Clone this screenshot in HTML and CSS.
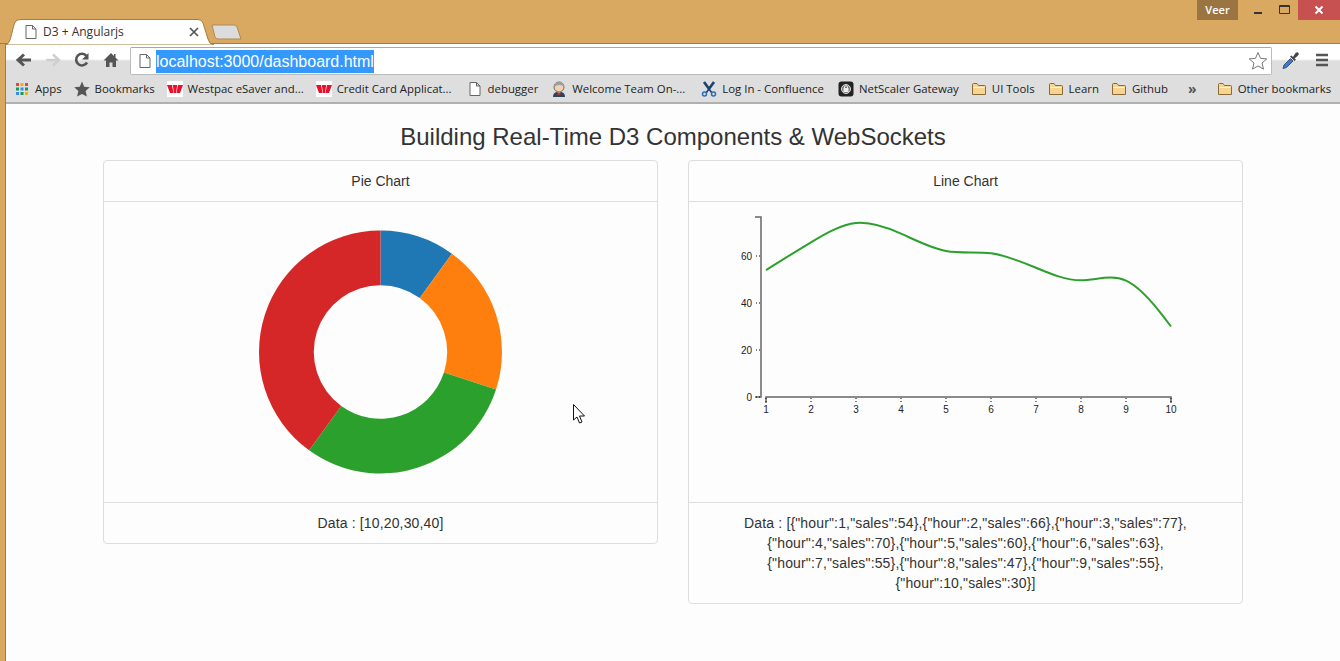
FILE: index.html
```html
<!DOCTYPE html>
<html lang="en">
<head>
    <meta charset="UTF-8">
    <title>D3 + Angularjs</title>
    <link rel="stylesheet" href="styles.css">
</head>
<body>

    <svg class="defs">
        <symbol id="doc" viewBox="0 0 16 16">
            <path d="M3 1.500h6.500l3.500 3.500v9.500H3z M9.500 1.500V5H13" fill="#fff" stroke="#666" stroke-width="1"/>
        </symbol>
        <symbol id="folder" viewBox="0 0 16 16">
            <path d="M1.500 13.500V3.500q0-1 1-1h3.500l1.500 2h6q1 0 1 1v8z" fill="#f6d493" stroke="#8a6a35"/>
            <path d="M2.500 6.500h11" stroke="#fff3d6"/>
        </symbol>
        <symbol id="westpac" viewBox="0 0 16 16">
            <rect width="16" height="16" fill="#fff"/>
            <path d="M0 4h5l1.500 8H3z M5.800 4h4.400L9 12H7z M11 4h5l-3 8H9.500z" fill="#e8102a"/>
        </symbol>
    </svg>

    <header class="titlebar">
        <div class="tab">
            <svg class="tab-shape" width="216" height="26" viewBox="0 0 216 26"><path d="M6 26C12 24 12 6 16 2Q18 .5 21 .5H198Q202 .5 203 4L208 20Q209 25 214 26z" fill="#fff" stroke="#a37c3f"/></svg>
            <svg class="tab-icon" width="16" height="16"><use href="#doc"/></svg>
            <span class="tab-title">D3 + Angularjs</span>
            <svg class="tab-close" width="10" height="10" viewBox="0 0 10 10"><path d="M1 1l8 8M9 1l-8 8" stroke="#555" stroke-width="1.700"/></svg>
        </div>
        <svg class="new-tab" width="32" height="16" viewBox="0 0 32 16"><path d="M1 1H23Q25 1 26 3L30 15H7Q5 15 4 13z" fill="#dcdcdc" stroke="#b08b50"/></svg>
        <div class="user-badge">Veer</div>
        <div class="win-controls">
            <div class="win-btn"><svg width="10" height="10" viewBox="0 0 10 10"><path d="M1 8h8" stroke="#333" stroke-width="2"/></svg></div>
            <div class="win-btn"><svg width="11" height="10" viewBox="0 0 11 10"><path d="M.5 .5h10v8H.5z M.5 1.500h10" fill="none" stroke="#333"/></svg></div>
            <div class="win-btn win-close"><svg width="10" height="10" viewBox="0 0 10 10"><path d="M1.500 1.500l7 7M8.500 1.500l-7 7" stroke="#fff" stroke-width="2"/></svg></div>
        </div>
    </header>

    <div class="window">
        <div class="toolbar">
            <svg class="nav-icon" width="20" height="20" viewBox="0 0 20 20"><path d="M17 10H5M10 4.500L4 10l6 5.500" fill="none" stroke="#555" stroke-width="3"/></svg>
            <svg class="nav-icon" width="20" height="20" viewBox="0 0 20 20"><path d="M3 10h12M10 4.500L16 10l-6 5.500" fill="none" stroke="#cfcfcf" stroke-width="2.400"/></svg>
            <svg class="nav-icon" width="20" height="20" viewBox="0 0 20 20"><path d="M15 12.500A5.800 5.800 0 1 1 14.500 6" fill="none" stroke="#555" stroke-width="2.600"/><path d="M16.500 3v6.500H10z" fill="#555"/></svg>
            <svg class="nav-icon" width="20" height="20" viewBox="0 0 20 20"><path d="M10 3L2.500 10.500H5V17h3.500v-4.500h3V17H15v-6.500h2.500L14.500 7.500V4H13v2z" fill="#555"/></svg>
            <div class="omnibox">
                <svg width="16" height="16"><use href="#doc"/></svg>
                <span class="url">localhost:3000/dashboard.html</span>
                <svg class="star" width="20" height="20" viewBox="0 0 20 20"><path d="M10 1.500l2.500 5.800 6.300.6-4.800 4.100 1.500 6.100L10 14.900l-5.500 3.200L6 12 1.200 7.900l6.300-.6z" fill="#fff" stroke="#777"/></svg>
            </div>
            <svg class="dropper" width="20" height="20" viewBox="0 0 20 20"><path d="M2 18.500L3 15l6.500-6.500 2.500 2.500L5.500 17.500z" fill="#3c78d8" stroke="#456"/><path d="M10.500 5.500l1.500 1.500 2.500-4q2-1.500 3 0t-1 3l-3 2.500L15 9.500 13.500 11 9 6.500z" fill="#444"/></svg>
            <svg class="menu" width="14" height="14" viewBox="0 0 14 14"><path d="M1 2h12M1 7h12M1 12h12" stroke="#555" stroke-width="2.400"/></svg>
        </div>

        <nav class="bookmarks">
            <a class="bm">
                <svg width="16" height="16" viewBox="0 0 16 16">
                    <path d="M2 2h3v3H2z" fill="#e8453c"/><path d="M6.500 2h3v3h-3z" fill="#f4b400"/><path d="M11 2h3v3h-3z" fill="#e8453c"/>
                    <path d="M2 6.500h3v3H2z" fill="#0f9d58"/><path d="M6.500 6.500h3v3h-3z" fill="#4285f4"/><path d="M11 6.500h3v3h-3z" fill="#0f9d58"/>
                    <path d="M2 11h3v3H2z" fill="#4285f4"/><path d="M6.500 11h3v3h-3z" fill="#0f9d58"/><path d="M11 11h3v3h-3z" fill="#f4b400"/>
                </svg>
                Apps
            </a>
            <a class="bm">
                <svg width="16" height="16" viewBox="0 0 16 16"><path d="M8 .5l2.200 5.200 5.600.5-4.200 3.700 1.300 5.500L8 12.900l-4.900 2.500 1.300-5.500L.2 6.200l5.600-.5z" fill="#555"/></svg>
                Bookmarks
            </a>
            <a class="bm"><svg width="16" height="16"><use href="#westpac"/></svg>Westpac eSaver and...</a>
            <a class="bm"><svg width="16" height="16"><use href="#westpac"/></svg>Credit Card Applicat...</a>
            <a class="bm bm-debugger"><svg width="16" height="16"><use href="#doc"/></svg>debugger</a>
            <a class="bm bm-welcome">
                <svg width="16" height="16" viewBox="0 0 16 16">
                    <circle cx="8" cy="6" r="5" fill="#f0d3b0" stroke="#7a6a58"/>
                    <path d="M3 6q0-5 5-5t5 5q-2-2.500-5-2t-5 2z" fill="#9aa0a5"/>
                    <path d="M2 16q0-4.500 4-5l2 1.500 2-1.500q4 .5 4 5z" fill="#33415c"/>
                    <path d="M7 11l1 1.500 1-1.500 .5 3h-3z" fill="#c33"/>
                </svg>
                Welcome Team On-...
            </a>
            <a class="bm bm-confluence">
                <svg width="16" height="16" viewBox="0 0 16 16"><path d="M3 1l5.500 7.500M13 1L7.500 8.500" stroke="#1d3f72" stroke-width="2.600"/><path d="M8 8l-3 4M8 8l3 4" stroke="#1d3f72" stroke-width="1.600"/><circle cx="3.500" cy="13" r="2" fill="none" stroke="#2a6db5" stroke-width="1.500"/><circle cx="12.500" cy="13" r="2" fill="none" stroke="#2a6db5" stroke-width="1.500"/></svg>
                Log In - Confluence
            </a>
            <a class="bm bm-netscaler">
                <svg width="16" height="16" viewBox="0 0 16 16"><rect x=".5" y=".5" width="15" height="15" rx="3" fill="#222"/><circle cx="8" cy="8" r="4.500" fill="#777" stroke="#ddd"/><rect x="5.500" y="7" width="5" height="4" fill="#eee"/><path d="M6.500 7V5.500q1.500-1.500 3 0V7" fill="none" stroke="#eee"/></svg>
                NetScaler Gateway
            </a>
            <a class="bm"><svg width="16" height="16"><use href="#folder"/></svg>UI Tools</a>
            <a class="bm bm-learn"><svg width="16" height="16"><use href="#folder"/></svg>Learn</a>
            <a class="bm"><svg width="16" height="16"><use href="#folder"/></svg>Github</a>
            <span class="bm-more">»</span>
            <a class="bm bm-other"><svg width="16" height="16"><use href="#folder"/></svg>Other bookmarks</a>
        </nav>

        <main class="page">
            <div class="container">
                <h3>Building Real-Time D3 Components &amp; WebSockets</h3>
                <div class="row">
                    <section class="panel">
                        <div class="panel-heading">Pie Chart</div>
                        <div class="panel-body">
                            <svg class="chart" width="553" height="300">
                                <g transform="translate(276.5,150) scale(.996)">
                                    <path d="M0-122A122 122 0 0 1 71.700-98.700L39.400-54.200A67 67 0 0 0 0-67z" fill="#1f77b4"/>
                                    <path d="M71.700-98.700A122 122 0 0 1 116 37.700L63.700 20.700A67 67 0 0 0 39.400-54.200z" fill="#ff7f0e"/>
                                    <path d="M116 37.700A122 122 0 0 1-71.700 98.700L-39.400 54.200A67 67 0 0 0 63.700 20.700z" fill="#2ca02c"/>
                                    <path d="M-71.700 98.700A122 122 0 0 1 0-122V-67A67 67 0 0 0-39.400 54.200z" fill="#d62728"/>
                                </g>
                            </svg>
                        </div>
                        <div class="panel-footer">Data : [10,20,30,40]</div>
                    </section>
                    <section class="panel">
                        <div class="panel-heading">Line Chart</div>
                        <div class="panel-body">
                            <svg class="chart" id="lineChart" width="553" height="300"></svg>
                        </div>
                        <div class="panel-footer">Data : [{"hour":1,"sales":54},{"hour":2,"sales":66},{"hour":3,"sales":77},{"hour":4,"sales":70},{"hour":5,"sales":60},{"hour":6,"sales":63},{"hour":7,"sales":55},{"hour":8,"sales":47},{"hour":9,"sales":55},{"hour":10,"sales":30}]</div>
                    </section>
                </div>
            </div>
        </main>
    </div>

    <svg class="cursor" width="14" height="21" viewBox="0 0 14 21"><path d="M.5 .5V16l3.500-3 2.500 6 2.500-1-2.500-6h5z" fill="#fff" stroke="#111"/></svg>

    <script src="charts.js"></script>
</body>
</html>
```

FILE: styles.css
```css
body {
    font-family: "Liberation Sans", Arial, sans-serif;
    font-size: 14px;
    line-height: 20px;
    color: #333;
    background: #d9a961;
    margin: 0;
    height: 100vh;
    overflow: hidden;
    display: flex;
    flex-direction: column;
}
.defs {
    display: none;
}

/* window frame */
.titlebar {
    height: 44px;
    flex: none;
    display: flex;
    align-items: flex-start;
    border-bottom: 1px solid #a37c3f;
    box-sizing: border-box;
}
.tab {
    position: relative;
    width: 206px;
    height: 25px;
    margin-top: 19px;
    display: flex;
    align-items: center;
    font-family: "Open Sans", sans-serif;
    font-size: 12px;
    color: #333;
}
.tab-shape {
    position: absolute;
    left: 0;
    top: 0;
    overflow: hidden;
}
.tab-icon {
    position: relative;
    margin-left: 23px;
}
.tab-title {
    position: relative;
    margin-left: 4px;
    flex: 1;
}
.tab-close {
    position: relative;
    margin-right: 7px;
}
.new-tab {
    margin-top: 24px;
    margin-left: 5px;
}
.user-badge {
    margin-left: auto;
    width: 41px;
    height: 20px;
    background: #9a7541;
    color: #fff;
    font-family: "Open Sans", sans-serif;
    font-size: 11px;
    font-weight: 600;
    line-height: 20px;
    text-align: center;
}
.win-controls {
    display: flex;
    margin-left: 6px;
}
.win-btn {
    width: 27px;
    height: 20px;
    display: flex;
    align-items: center;
    justify-content: center;
}
.win-close {
    width: 42px;
    background: #c75050;
}
.window {
    flex: 1;
    margin-left: 5px;
    background: #fdfdfd;
    border-left: 1px solid #a37c3f;
    display: flex;
    flex-direction: column;
    min-height: 0;
}

/* toolbar */
.toolbar {
    height: 32px;
    flex: none;
    display: flex;
    align-items: center;
    box-sizing: border-box;
    padding-left: 8px;
    background: linear-gradient(#fff 15px, #dedede 17px);
}
.nav-icon {
    margin-right: 9px;
}
.omnibox {
    width: 1142px;
    height: 28px;
    box-sizing: border-box;
    border: 1px solid #bbb;
    border-top-color: #a8a8a8;
    border-radius: 2px;
    background: #fff;
    display: flex;
    align-items: center;
    padding-left: 6px;
    margin-top: 2px;
}
.url {
    margin-left: 3px;
    background: #3399ff;
    color: #fff;
    font-size: 16px;
    line-height: 23px;
    height: 23px;
}
.star {
    margin-left: auto;
    margin-right: 3px;
}
.dropper {
    margin-left: 9px;
}
.menu {
    margin-left: 14px;
}

/* bookmarks bar */
.bookmarks {
    height: 28px;
    flex: none;
    box-sizing: border-box;
    border-bottom: 2px solid #b0b0b0;
    background: #dedede;
    display: flex;
    align-items: center;
    gap: 12px;
    padding-left: 8px;
    font-family: "Open Sans", sans-serif;
    font-size: 11.4px;
    color: #222;
    white-space: nowrap;
}
.bm {
    display: flex;
    align-items: center;
    gap: 5px;
}
.bm-debugger {
    margin-left: 3px;
}
.bm-welcome {
    margin-left: 1px;
}
.bm-confluence {
    margin-left: 4px;
}
.bm-netscaler {
    margin-left: 2px;
}
.bm-learn {
    margin-left: 1px;
}
.bm-more {
    margin-left: 8px;
    font-weight: 700;
    color: #555;
    font-size: 14px;
}
.bm-other {
    margin-left: 8px;
}

/* page */
.page {
    flex: 1;
    min-height: 0;
}
.container {
    width: 1140px;
    margin: 0 auto;
}
h3 {
    font-size: 24px;
    font-weight: 400;
    line-height: 26px;
    text-align: center;
    margin: 20px 0 10px;
}
.row {
    display: flex;
    align-items: flex-start;
    gap: 30px;
}
.panel {
    width: 555px;
    box-sizing: border-box;
    border: 1px solid #ddd;
    border-radius: 4px;
    text-align: center;
}
.panel-heading {
    padding: 10px 15px;
    border-bottom: 1px solid #ddd;
}
.panel-body {
    height: 300px;
}
.panel-footer {
    padding: 10px 30px;
    border-top: 1px solid #ddd;
    letter-spacing: .15px;
}
.chart {
    display: block;
}
.domain {
    stroke: #666;
    stroke-width: 1.5;
    fill: none;
}
.tick {
    stroke: #000;
    stroke-width: 1;
    stroke-dasharray: 1 2;
}
.tick-label {
    font-size: 10px;
    fill: #222;
}
.sales-line {
    stroke: #2ca02c;
    stroke-width: 2;
    fill: none;
}

/* mouse pointer caught by the recording */
.cursor {
    position: absolute;
    left: 573px;
    top: 404px;
}
```

FILE: charts.js
```js
var sales = [54, 66, 77, 70, 60, 63, 55, 47, 55, 30];
var svg = document.getElementById("lineChart");
var NS = "http://www.w3.org/2000/svg";

function xPos(hour) { return 77 + (hour - 1) * 45; }
function yPos(value) { return 195 - value * 2.35; }

function add(name, attrs, text) {
    var el = document.createElementNS(NS, name);
    for (var k in attrs) el.setAttribute(k, attrs[k]);
    if (text !== undefined) el.textContent = text;
    svg.appendChild(el);
}

// same curve as d3's basis interpolation
function basisPath(p) {
    var d = "M" + p[0].join(",");
    d += "L" + (5 * p[0][0] + p[1][0]) / 6 + "," + (5 * p[0][1] + p[1][1]) / 6;
    var pts = p.concat([p[p.length - 1]]);
    for (var i = 2; i < pts.length; i++) {
        var a = pts[i - 2], b = pts[i - 1], c = pts[i];
        d += "C" + (2 * a[0] + b[0]) / 3 + "," + (2 * a[1] + b[1]) / 3 +
             " " + (a[0] + 2 * b[0]) / 3 + "," + (a[1] + 2 * b[1]) / 3 +
             " " + (a[0] + 4 * b[0] + c[0]) / 6 + "," + (a[1] + 4 * b[1] + c[1]) / 6;
    }
    return d + "L" + p[p.length - 1].join(",");
}

// y axis
add("path", { "class": "domain", d: "M66,15H72V195H66" });
[0, 20, 40, 60].forEach(function (v) {
    add("line", { "class": "tick", x1: 67, x2: 71, y1: yPos(v), y2: yPos(v) });
    add("text", { "class": "tick-label", x: 63, y: yPos(v) + 3.5, "text-anchor": "end" }, v);
});

// x axis
add("path", { "class": "domain", d: "M77,201V195H482V201" });
sales.forEach(function (v, i) {
    var x = xPos(i + 1);
    add("line", { "class": "tick", x1: x, x2: x, y1: 196, y2: 200 });
    add("text", { "class": "tick-label", x: x, y: 211, "text-anchor": "middle" }, i + 1);
});

add("path", {
    "class": "sales-line",
    d: basisPath(sales.map(function (v, i) { return [xPos(i + 1), yPos(v)]; }))
});
```
